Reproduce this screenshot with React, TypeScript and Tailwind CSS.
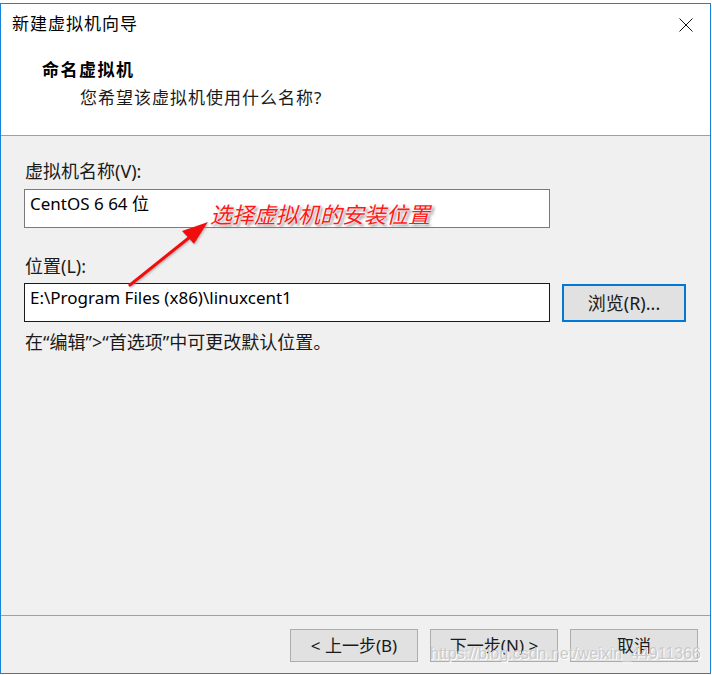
import React from "react";

const ui = "font-['Segoe_UI','Noto_Sans','Noto_Sans_CJK_SC',sans-serif]";

function WizButton({ label, focused = false }: { label: string; focused?: boolean }) {
  return (
    <button
      className={
        focused
          ? "w-[124px] h-[38px] border-2 border-[#0078d7] bg-[#e1e1e1] text-[18px] leading-[22px] text-[#1a1a1a]"
          : "w-[128px] h-[33px] border border-[#adadad] bg-[#e1e1e1] text-[17px] leading-[22px] text-[#1a1a1a]"
      }
    >
      {label}
    </button>
  );
}

export default function App() {
  return (
    <div className={`relative w-[712px] h-[675px] bg-white pt-[3px] ${ui}`}>
      <div className="w-[711px] h-[671px] border border-[#1883d7] flex flex-col">
        {/* title + header */}
        <div className="h-[132px] bg-white border-b border-[#a0a0a0] flex flex-col">
          <div className="h-[40px] flex items-center justify-between pl-[11px] pr-[17px]">
            <span className="text-[17px] tracking-[1px] text-black leading-[22px]">新建虚拟机向导</span>
            <svg width="14" height="14" viewBox="0 0 14 14" className="mt-[2px]">
              <path d="M0.5 0.5 L13.5 13.5 M13.5 0.5 L0.5 13.5" stroke="#111" strokeWidth="1" fill="none" />
            </svg>
          </div>
          <div className="mt-[15px] pl-[41px] text-[17px] tracking-[1.5px] font-bold leading-[22px] text-black">命名虚拟机</div>
          <div className="mt-[6px] pl-[79px] text-[17px] tracking-[1px] leading-[22px] text-[#1a1a1a]">您希望该虚拟机使用什么名称?</div>
        </div>

        {/* body */}
        <div className="flex-1 bg-[#f0f0f0] border-b border-[#a0a0a0] pl-[23px] pt-[24px] flex flex-col">
          <div className="pl-[1px] text-[18px] leading-[22px] text-[#1a1a1a]">虚拟机名称(V):</div>
          <div className="mt-[7px] w-[526px] h-[39px] border border-[#7a7a7a] bg-white pl-[5px] pt-[3px] text-[17px] leading-[22px] text-black">
            CentOS 6 64 位
          </div>
          <div className="mt-[27px] pl-[1px] text-[18px] leading-[22px] text-[#1a1a1a]">位置(L):</div>
          <div className="mt-[6px] flex items-start">
            <div className="w-[526px] h-[39px] border border-[#1a1a1a] bg-white pl-[5px] pt-[3px] text-[17px] leading-[22px] text-black">
              E:\Program Files (x86)\linuxcent1
            </div>
            <div className="ml-[12px] mt-[1px]">
              <WizButton label="浏览(R)..." focused />
            </div>
          </div>
          <div className="mt-[9px] pl-[1px] text-[18px] leading-[22px] text-[#1a1a1a]">
            在“编辑”&gt;“首选项”中可更改默认位置。
          </div>
        </div>

        {/* footer */}
        <div className="h-[57px] bg-[#f0f0f0] pt-[13px] pr-[12px] flex justify-end items-start gap-[12px]">
          <WizButton label="<  上一步(B)" />
          <WizButton label="下一步(N)  >" />
          <WizButton label="取消" />
        </div>
      </div>

      {/* annotation overlay */}
      <svg className="absolute left-0 top-0 pointer-events-none" width="712" height="675">
        <defs>
          <filter id="sh" x="-20%" y="-20%" width="140%" height="140%">
            <feDropShadow dx="1" dy="1" stdDeviation="1" floodColor="#888" floodOpacity="0.6" />
          </filter>
        </defs>
        <g filter="url(#sh)">
          <line x1="130" y1="285" x2="195" y2="233" stroke="#f01010" strokeWidth="3.2" strokeLinecap="round" />
          <polygon points="208,222 182,231 194,244" fill="#f01010" />
        </g>
      </svg>
      <div className="absolute left-[210px] top-[199px] text-[22px] leading-[28px] italic text-[#ff1a1a] font-['Noto_Sans_CJK_SC',sans-serif] [text-shadow:0_0_2px_#fff,0_0_3px_#fff,2px_2px_3px_#777]">
        选择虚拟机的安装位置
      </div>
      <div className="absolute left-[430px] top-[644px] text-[16px] leading-5 text-[#cacaca] font-['Liberation_Sans',sans-serif] [text-shadow:1px_1px_0_#fff]">
        https://blog.csdn.net/weixin_44911366
      </div>
    </div>
  );
}
